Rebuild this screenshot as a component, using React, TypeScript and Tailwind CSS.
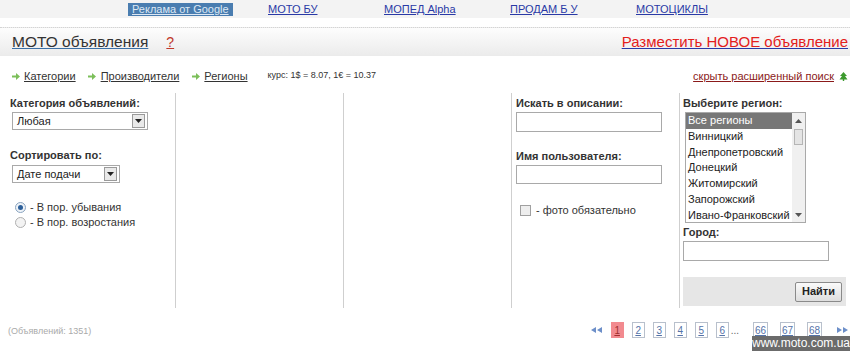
import React from "react"

const f = { fontFamily: "'Liberation Sans', Arial, sans-serif" }

function Arrow() {
    return (
        <svg width="8" height="7" viewBox="0 0 8 7" className="shrink-0">
            <path d="M0 2.5h4V0l4 3.5L4 7V4.5H0z" fill="#7cbf5a" />
        </svg>
    )
}

function SelectBox({ value, width }: { value: string; width: string }) {
    return (
        <div className={`flex items-center h-[18px] border border-[#a9a9a9] bg-white ${width}`}>
            <span className="flex-1 pl-[4px] text-[11px] text-[#222]">{value}</span>
            <span className="flex h-[14px] w-[13px] mr-[2px] items-center justify-center border border-[#9a9a9a] bg-[#e9e9e9]">
                <svg width="7" height="4" viewBox="0 0 7 4"><path d="M0 0h7L3.5 4z" fill="#222" /></svg>
            </span>
        </div>
    )
}

const regions = ["Все регионы", "Винницкий", "Днепропетровский", "Донецкий", "Житомирский", "Запорожский", "Ивано-Франковский"]

export default function App() {
    return (
        <div className="w-[850px] h-[351px] bg-white relative overflow-hidden text-[#333]" style={f}>
            {/* top bar */}
            <div className="flex h-[18px] items-center bg-[#f3f3f3] pl-[128px] text-[11px]">
                <div className="w-[140px]">
                    <span className="inline-block bg-[#4a7db0] px-[4px] text-[11px] leading-[13px] text-[#dde8f4] underline">Реклама от Google</span>
                </div>
                <a className="w-[116px] text-[#2a3aa6] underline">МОТО БУ</a>
                <a className="w-[126px] text-[#2a3aa6] underline">МОПЕД Alpha</a>
                <a className="w-[126px] text-[#2a3aa6] underline">ПРОДАМ Б У</a>
                <a className="text-[#2a3aa6] underline">МОТОЦИКЛЫ</a>
            </div>

            {/* header band */}
            <div className="mt-[9px] flex h-[29px] items-center justify-between border-t border-dotted border-[#d4d4d4] bg-gradient-to-b from-[#fdfdfd] to-[#ebebeb] pl-[12px] pr-[2px]">
                <div className="flex items-center">
                    <span className="text-[15.5px] text-[#333] underline decoration-[#3a6fa5]">МОТО объявления</span>
                    <span className="ml-[18px] text-[14px] text-[#c0392b] underline">?</span>
                </div>
                <span className="text-[15px] text-[#e3201c] underline decoration-[#2a3aa6]">Разместить НОВОЕ объявление</span>
            </div>

            {/* links row */}
            <div className="mt-[12px] flex h-[16px] items-center pl-[12px] pr-[2px] text-[11px]">
                <Arrow />
                <span className="ml-[4px] text-[#333] underline">Категории</span>
                <span className="ml-[12px]"><Arrow /></span>
                <span className="ml-[5px] text-[#333] underline">Производители</span>
                <span className="ml-[13px]"><Arrow /></span>
                <span className="ml-[4px] text-[#333] underline">Регионы</span>
                <span className="ml-[20px] text-[9px] text-[#333]">курс: 1$ = 8.07, 1€ = 10.37</span>
                <span className="ml-auto text-[#8b1a1a] underline">скрыть расширенный поиск</span>
                <svg width="9" height="9" viewBox="0 0 9 9" className="ml-[5px]">
                    <path d="M4.5 0L8 4H6l2.5 3.5H5.2V9H3.8V7.5H.5L3 4H1z" fill="#3d9a2e" />
                </svg>
            </div>

            {/* columns */}
            <div className="mt-[9px] grid h-[215px] grid-cols-[176px_168px_168px_168px_170px] text-[11px] leading-[13px]">
                <div className="border-r border-[#cfcfcf] pl-[10px] pt-[4px]">
                    <div className="font-bold text-[#333]">Категория объявлений:</div>
                    <div className="mt-[2px] ml-[2px]"><SelectBox value="Любая" width="w-[136px]" /></div>
                    <div className="mt-[19px] font-bold text-[#333]">Сортировать по:</div>
                    <div className="mt-[3px] ml-[2px]"><SelectBox value="Дате подачи" width="w-[108px]" /></div>
                    <div className="mt-[18px] flex flex-col gap-[2px] pl-[5px]">
                        <label className="flex items-center gap-[4px]">
                            <span className="flex h-[11px] w-[11px] items-center justify-center rounded-full border border-[#8aa4c0] bg-[#eef3f8]">
                                <span className="h-[5px] w-[5px] rounded-full bg-[#2c5f9a]" />
                            </span>
                            <span>- В пор. убывания</span>
                        </label>
                        <label className="flex items-center gap-[4px]">
                            <span className="h-[11px] w-[11px] rounded-full border border-[#b0b0b0] bg-[#f3f3f3]" />
                            <span>- В пор. возростания</span>
                        </label>
                    </div>
                </div>
                <div className="border-r border-[#cfcfcf]" />
                <div className="border-r border-[#cfcfcf]" />
                <div className="border-r border-[#cfcfcf] pl-[4px] pt-[4px]">
                    <div className="font-bold">Искать в описании:</div>
                    <div className="mt-[2px] h-[20px] w-[146px] border border-[#a9a9a9] bg-white" />
                    <div className="mt-[18px] font-bold">Имя пользователя:</div>
                    <div className="mt-[2px] h-[19px] w-[146px] border border-[#a9a9a9] bg-white" />
                    <label className="mt-[20px] ml-[4px] flex items-center gap-[5px]">
                        <span className="h-[11px] w-[11px] border border-[#a0a0a0] bg-[#eeeeee]" />
                        <span>- фото обязательно</span>
                    </label>
                </div>
                <div className="flex flex-col pl-[3px] pt-[4px]">
                    <div className="font-bold">Выберите регион:</div>
                    <div className="mt-[2px] ml-[2px] flex h-[111px] w-[121px] border border-[#a9a9a9] bg-white">
                        <div className="flex-1 overflow-hidden">
                            {regions.map((r, i) => (
                                <div key={r} className={`h-[15.8px] pl-[2px] leading-[15.8px] whitespace-nowrap ${i === 0 ? "bg-[#777777] text-white" : "text-[#222]"}`}>{r}</div>
                            ))}
                        </div>
                        <div className="flex w-[13px] flex-col items-center bg-[#f0f0f0]">
                            <svg width="7" height="4" viewBox="0 0 7 4" className="mt-[6px]"><path d="M0 4h7L3.5 0z" fill="#555" /></svg>
                            <div className="mt-[6px] h-[16px] w-[9px] border border-[#b5b5b5] bg-[#e4e4e4]" />
                            <svg width="7" height="4" viewBox="0 0 7 4" className="mt-auto mb-[5px]"><path d="M0 0h7L3.5 4z" fill="#555" /></svg>
                        </div>
                    </div>
                    <div className="mt-[3px] font-bold">Город:</div>
                    <div className="mt-[2px] h-[20px] w-[146px] border border-[#a9a9a9] bg-white" />
                    <div className="mt-auto mb-[2px] mr-[4px] flex h-[29px] items-center justify-end bg-[#e6e6e6] pr-[4px]">
                        <button className="h-[20px] rounded-[2px] border border-[#8a8a8a] bg-gradient-to-b from-[#fafafa] to-[#dedede] px-[6px] text-[11px] font-bold text-[#222]">Найти</button>
                    </div>
                </div>
            </div>

            {/* footer */}
            <div className="mt-[14px] flex h-[16px] items-center pl-[8px]">
                <span className="mt-[4px] text-[9px] text-[#aaaaaa]">(Объявлений: 1351)</span>
                <div className="ml-auto mr-[2px] flex items-center text-[10px]">
                    <svg width="11" height="6" viewBox="0 0 11 6" className="mr-[9px]">
                        <path d="M5 0L0 3l5 3zM11 0L6 3l5 3z" fill="#6d8fc9" />
                    </svg>
                    <span className="mr-[8px] flex h-[16px] w-[13px] items-center justify-center bg-[#f28a8f] text-[#a03030] underline">1</span>
                    {["2", "3", "4", "5", "6"].map((n, i) => (
                        <span key={n} className={`flex h-[16px] w-[13px] items-center justify-center border border-[#b8c0cc] text-[#5573a8] underline ${i < 4 ? "mr-[8px]" : ""}`}>{n}</span>
                    ))}
                    <span className="ml-[2px] mr-[14px] text-[#666]">...</span>
                    {["66", "67", "68"].map((n) => (
                        <span key={n} className="mr-[12px] flex h-[16px] w-[15px] items-center justify-center border border-[#b8c0cc] text-[#5573a8] underline">{n}</span>
                    ))}
                    <svg width="11" height="6" viewBox="0 0 11 6" className="ml-[3px]">
                        <path d="M0 0l5 3-5 3zM6 0l5 3-5 3z" fill="#6d8fc9" />
                    </svg>
                </div>
            </div>

            <div className="absolute bottom-0 right-0 h-[15px] w-[98px] bg-[#6b6b6b] text-center text-[12px] leading-[15px] text-white">www.moto.com.ua</div>
        </div>
    )
}
